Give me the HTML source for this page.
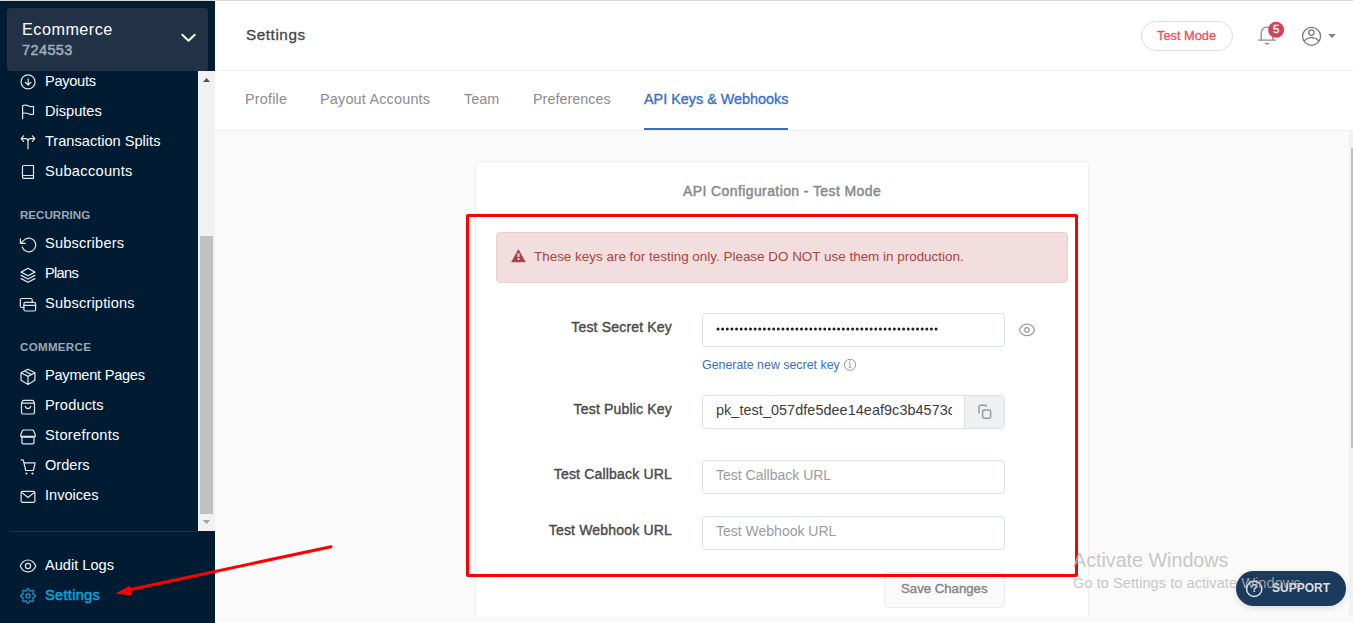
<!DOCTYPE html>
<html><head><meta charset="utf-8">
<style>
*{margin:0;padding:0;box-sizing:border-box}
html,body{width:1353px;height:623px;overflow:hidden;background:#fafafa;font-family:"Liberation Sans",sans-serif}
.a{position:absolute;white-space:nowrap}
svg{position:absolute;overflow:visible}
#topline{position:absolute;left:0;top:0;width:1353px;height:1px;background:#d9d9d9}
#side{position:absolute;left:0;top:1px;width:215px;height:622px;background:#011b33}
#sw{position:absolute;left:7px;top:7px;width:201px;height:63px;background:#213246;border-radius:3px}
.nav{position:absolute;left:45px;font-size:14.6px;line-height:15px;color:#fff;white-space:nowrap}
.sec{position:absolute;left:20px;font-size:11.6px;font-weight:bold;line-height:12px;color:#9aa7b4}
#sbar{position:absolute;left:198px;top:71px;width:17px;height:460px;background:#f1f1f1}
#thumb{position:absolute;left:2px;top:165px;width:13px;height:278px;background:#c1c1c1}
#hdr{position:absolute;left:215px;top:1px;width:1138px;height:69px;background:#fff}
#hb1{position:absolute;left:215px;top:70px;width:1138px;height:1px;background:#efefef}
#tabs{position:absolute;left:215px;top:71px;width:1138px;height:59px;background:#fff}
#hb2{position:absolute;left:215px;top:130px;width:1138px;height:1px;background:#efefef}
.tab{position:absolute;font-size:14.4px;line-height:15px;color:#8c8c8c;white-space:nowrap}
#card{position:absolute;left:475px;top:161px;width:614px;height:470px;background:#fff;border:1px solid #efefef;border-radius:4px}
#alert{position:absolute;left:496px;top:232px;width:572px;height:51px;background:#f2dede;border:1px solid #ebccd1;border-radius:4px}
.lbl{position:absolute;font-size:14px;line-height:15px;color:#4a4a4a;letter-spacing:0.18px;-webkit-text-stroke:0.4px #4a4a4a;text-align:right;right:681px;white-space:nowrap}
.inp{position:absolute;left:702px;width:303px;height:34px;border:1px solid #dde2e5;border-radius:3px;background:#fff;overflow:hidden}
.ph{position:absolute;left:13px;top:7px;font-size:14px;line-height:15px;color:#9b9b9b;white-space:nowrap}
#red{position:absolute;left:466px;top:214px;width:612px;height:363px;border:3px solid #ff0000;border-radius:2px}
.ic{fill:none;stroke:#e4e7ea;stroke-width:1.2;stroke-linecap:round;stroke-linejoin:round}
</style></head><body>
<div id="topline"></div>
<div id="side"><div id="sw"></div></div>
<div class="a" style="left:22px;top:21px;font-size:16.2px;line-height:16px;color:#fff;letter-spacing:0.5px">Ecommerce</div>
<svg style="left:0;top:0" width="215" height="623"><path d="M182.3 34.7 L188.5 40.8 L194.7 34.7" fill="none" stroke="#fff" stroke-width="2" stroke-linecap="round" stroke-linejoin="round"/></svg>
<div class="a" style="left:22px;top:43px;font-size:14.5px;line-height:14px;color:#a3afbc;letter-spacing:0.4px;-webkit-text-stroke:0.45px #a3afbc">724553</div>

<div class="nav" style="top:74px;letter-spacing:-0.3px">Payouts</div>
<div class="nav" style="top:104px">Disputes</div>
<div class="nav" style="top:134px">Transaction Splits</div>
<div class="nav" style="top:164px;letter-spacing:0.3px">Subaccounts</div>
<div class="sec" style="top:209px">RECURRING</div>
<div class="nav" style="top:236px;letter-spacing:0.2px">Subscribers</div>
<div class="nav" style="top:266px;letter-spacing:-0.7px">Plans</div>
<div class="nav" style="top:296px;letter-spacing:0.17px">Subscriptions</div>
<div class="sec" style="top:341px;letter-spacing:0.28px">COMMERCE</div>
<div class="nav" style="top:368px;letter-spacing:-0.25px">Payment Pages</div>
<div class="nav" style="top:398px;letter-spacing:0.14px">Products</div>
<div class="nav" style="top:428px;letter-spacing:0.3px">Storefronts</div>
<div class="nav" style="top:458px">Orders</div>
<div class="nav" style="top:488px">Invoices</div>

<svg style="left:0;top:0" width="215" height="623" class="ic">
<!-- payouts -->
<circle cx="28.05" cy="81.9" r="7"/><path d="M28.2 78.9V84.7M25.3 82.3L28.2 85L30.9 82.3"/>
<!-- disputes -->
<path d="M22.6 118.7V105.5C25 104.8 27 105 28.5 106C30 107 31.5 106.6 33.5 106.4V114.2C31.5 114.4 30 114.8 28.5 113.8C27 112.8 25 112.8 22.6 113.4"/>
<!-- splits -->
<path d="M28 148.7V141.2C28 139.7 27 138.6 25.5 138.6H21.3M23.6 135.8L21.2 138.6L23.6 141.3M28 141.2C28 139.7 29 138.6 30.5 138.6H34.8M32.4 135.8L34.8 138.6L32.4 141.3"/>
<!-- subaccounts book -->
<path d="M23.8 165.5H33.5V178.3H23.8C23 178.3 22.5 177.7 22.5 176.9V166.8C22.5 166 23 165.5 23.8 165.5ZM22.5 176.9C22.5 176.1 23 175.5 23.8 175.5H33.5"/>
<!-- subscribers -->
<path d="M22.2 246.8A6.9 6.9 0 1 0 23.2 241L20.8 243.1M20.4 238.9V243.3H25.3"/>
<!-- plans -->
<path d="M28 268.3L34.9 272.1L28 275.7L21.1 272.1ZM21.1 275.4L28 279L34.9 275.4M21.1 278.6L28 282.3L34.9 278.6"/>
<!-- subscriptions -->
<path d="M23.9 307.5H21.8C21 307.5 20.3 306.8 20.3 306V300C20.3 299.2 21 298.5 21.8 298.5H30.7C31.5 298.5 32.2 299.2 32.2 300V302.4"/>
<rect x="23.9" y="302.4" width="11.7" height="8.6" rx="1.5"/><path d="M23.9 305.4H35.6"/>
<!-- payment pages cube -->
<path d="M28 369.2L34.9 372.8V380.3L28 384.4L21 380.3V372.8ZM21 372.8L28 376.4L34.9 372.8M28 376.4V384.4M24.5 371L31.5 374.6"/>
<!-- products bag -->
<path d="M21.5 403.2V412.6C21.5 413.4 22.1 414 22.9 414H33.1C33.9 414 34.5 413.4 34.5 412.6V403.2L33.4 401C33.1 400.5 32.7 400.3 32.2 400.3H23.8C23.3 400.3 22.9 400.5 22.6 401ZM21.5 403.2H34.5M25.3 406.4C26.5 409.3 29.5 409.3 30.75 406.4"/>
<!-- storefront -->
<path d="M23.6 430H32.4C32.9 430 33.3 430.3 33.5 430.8L35.2 434.6V436.4H20.8V434.6L22.5 430.8C22.7 430.3 23.1 430 23.6 430ZM20.8 436.4C21.6 437.6 23.1 437.6 23.9 436.4C24.7 437.6 26.2 437.6 27 436.4C27.8 437.6 29.3 437.6 30.1 436.4C30.9 437.6 32.4 437.6 33.2 436.4C33.8 437.4 34.7 437.4 35.2 436.4M21.9 437V442.4C21.9 443.2 22.5 443.8 23.3 443.8H32.6C33.4 443.8 34 443.2 34 442.4V437"/>
<!-- orders cart -->
<path d="M21.1 459.8H22.4C22.9 459.8 23.3 460.1 23.4 460.6L25.7 470.5H33.4L35.1 462.8H23.9"/>
<circle cx="26.4" cy="473.5" r="1.1" fill="#e4e7ea" stroke="none"/><circle cx="32.5" cy="473.5" r="1.1" fill="#e4e7ea" stroke="none"/>
<!-- invoices -->
<rect x="21.1" y="491.3" width="13.8" height="11.1" rx="1.6"/><path d="M21.6 492.4L28 497.5L34.4 492.4"/>
<!-- audit eye -->
<path d="M20.2 566C22 562 25 560 28 560S34 562 35.8 566C34 570 31 571.9 28 571.9S22 570 20.2 566Z"/><circle cx="28" cy="566" r="2.6"/>
</svg>
<svg style="left:0;top:0" width="215" height="623"><g fill="none" stroke="#12a1d9" stroke-width="1.2">
<path d="M35.35 595.90 L35.19 596.37 L34.77 596.79 L34.18 597.13 L33.58 597.39 L33.10 597.63 L32.85 597.91 L32.83 598.28 L33.00 598.79 L33.24 599.40 L33.41 600.05 L33.42 600.65 L33.20 601.10 L32.75 601.32 L32.15 601.31 L31.50 601.14 L30.89 600.90 L30.38 600.73 L30.01 600.75 L29.73 601.00 L29.49 601.48 L29.23 602.08 L28.89 602.67 L28.47 603.09 L28.00 603.25 L27.53 603.09 L27.11 602.67 L26.77 602.08 L26.51 601.48 L26.27 601.00 L25.99 600.75 L25.62 600.73 L25.11 600.90 L24.50 601.14 L23.85 601.31 L23.25 601.32 L22.80 601.10 L22.58 600.65 L22.59 600.05 L22.76 599.40 L23.00 598.79 L23.17 598.28 L23.15 597.91 L22.90 597.63 L22.42 597.39 L21.82 597.13 L21.23 596.79 L20.81 596.37 L20.65 595.90 L20.81 595.43 L21.23 595.01 L21.82 594.67 L22.42 594.41 L22.90 594.17 L23.15 593.89 L23.17 593.52 L23.00 593.01 L22.76 592.40 L22.59 591.75 L22.58 591.15 L22.80 590.70 L23.25 590.48 L23.85 590.49 L24.50 590.66 L25.11 590.90 L25.62 591.07 L25.99 591.05 L26.27 590.80 L26.51 590.32 L26.77 589.72 L27.11 589.13 L27.53 588.71 L28.00 588.55 L28.47 588.71 L28.89 589.13 L29.23 589.72 L29.49 590.32 L29.73 590.80 L30.01 591.05 L30.38 591.07 L30.89 590.90 L31.50 590.66 L32.15 590.49 L32.75 590.48 L33.20 590.70 L33.42 591.15 L33.41 591.75 L33.24 592.40 L33.00 593.01 L32.83 593.52 L32.85 593.89 L33.10 594.17 L33.58 594.41 L34.18 594.67 L34.77 595.01 L35.19 595.43 L35.35 595.90Z" stroke-linejoin="round"/>
<circle cx="28" cy="595.9" r="2.1"/></g></svg>

<div id="sbar"><div id="thumb"></div></div>
<svg style="left:0;top:0" width="215" height="623"><path d="M203 82L206.5 77.9L210 82Z" fill="#505050"/><path d="M203 520L206.5 524.2L210 520Z" fill="#a3a3a3"/></svg>
<div class="a" style="left:10px;top:531px;width:188px;height:1px;background:#1e3348"></div>
<div class="nav" style="top:558px">Audit Logs</div>
<div class="nav" style="top:588px;color:#0ba4db;letter-spacing:0.3px;-webkit-text-stroke:0.45px #0ba4db">Settings</div>

<div id="hdr"></div>
<div id="hb1"></div>
<div id="tabs"></div>
<div id="hb2"></div>
<div class="a" style="left:246px;top:27px;font-size:15.3px;line-height:16px;color:#454545;letter-spacing:0.55px;-webkit-text-stroke:0.3px #454545">Settings</div>
<div class="a" style="left:1141px;top:21px;width:92px;height:30px;border:1px solid #dcdcdc;border-radius:15px;background:#fff"></div>
<div class="a" style="left:1157px;top:29px;font-size:12.8px;line-height:13px;color:#ef4f5b;-webkit-text-stroke:0.3px #ef4f5b">Test Mode</div>
<svg style="left:0;top:0" width="1353" height="70">
<path d="M1258.4 40.1H1275.6M1261.2 40.1V33C1261.2 29.6 1263.8 27.2 1267 27.2S1272.8 29.6 1272.8 33V40.1M1265.4 43.2C1266.3 44 1267.5 44 1268.4 43.2" fill="none" stroke="#8c8c8c" stroke-width="1.3" stroke-linecap="round"/>
<circle cx="1276.1" cy="29.8" r="8" fill="#cf4459"/>
<circle cx="1311.55" cy="36.3" r="9" fill="none" stroke="#7a7a7a" stroke-width="1.3"/>
<circle cx="1311.4" cy="32.6" r="2.7" fill="none" stroke="#7a7a7a" stroke-width="1.3"/>
<path d="M1304 41.3C1307.5 36.3 1315.5 36.3 1319 41.3" fill="none" stroke="#7a7a7a" stroke-width="1.3"/>
<path d="M1328.1 34.1H1335.8L1331.95 37.9Z" fill="#808080"/>
</svg>
<div class="a" style="left:1273px;top:24px;font-size:11.5px;line-height:11px;color:#fff;-webkit-text-stroke:0.3px #fff">5</div>

<div class="tab" style="left:245px;top:92px;letter-spacing:0.2px">Profile</div>
<div class="tab" style="left:320px;top:92px;letter-spacing:0.2px">Payout Accounts</div>
<div class="tab" style="left:464px;top:92px">Team</div>
<div class="tab" style="left:533px;top:92px">Preferences</div>
<div class="tab" style="left:644px;top:92px;color:#3b6fc3;-webkit-text-stroke:0.35px #3b6fc3">API Keys &amp; Webhooks</div>
<div class="a" style="left:644px;top:128px;width:144px;height:2px;background:#3b6fc3"></div>

<div id="card"></div>
<div class="a" style="left:683px;top:184px;font-size:14px;line-height:14px;color:#888;letter-spacing:0.4px;-webkit-text-stroke:0.45px #888">API Configuration - Test Mode</div>
<div id="alert"></div>
<svg style="left:0;top:0" width="1353" height="623"><path d="M518.4 249.6L525.3 261.9H511.6Z" fill="#a94442" stroke="#a94442" stroke-width="0.6" stroke-linejoin="round"/><rect x="517.5" y="253.4" width="2" height="3.6" fill="#f2dede"/><rect x="517.5" y="258.1" width="2" height="1.9" fill="#f2dede"/></svg>
<div class="a" style="left:534px;top:250px;font-size:13.45px;line-height:14px;color:#a94442">These keys are for testing only. Please DO NOT use them in production.</div>

<div class="lbl" style="top:320px">Test Secret Key</div>
<div class="inp" style="top:313px"><svg style="left:13px;top:12px" width="230" height="6" fill="#1e1e1e"><circle cx="2.00" cy="3" r="1.5"/><circle cx="6.64" cy="3" r="1.5"/><circle cx="11.28" cy="3" r="1.5"/><circle cx="15.92" cy="3" r="1.5"/><circle cx="20.56" cy="3" r="1.5"/><circle cx="25.20" cy="3" r="1.5"/><circle cx="29.84" cy="3" r="1.5"/><circle cx="34.48" cy="3" r="1.5"/><circle cx="39.12" cy="3" r="1.5"/><circle cx="43.76" cy="3" r="1.5"/><circle cx="48.40" cy="3" r="1.5"/><circle cx="53.04" cy="3" r="1.5"/><circle cx="57.68" cy="3" r="1.5"/><circle cx="62.32" cy="3" r="1.5"/><circle cx="66.96" cy="3" r="1.5"/><circle cx="71.60" cy="3" r="1.5"/><circle cx="76.24" cy="3" r="1.5"/><circle cx="80.88" cy="3" r="1.5"/><circle cx="85.52" cy="3" r="1.5"/><circle cx="90.16" cy="3" r="1.5"/><circle cx="94.80" cy="3" r="1.5"/><circle cx="99.44" cy="3" r="1.5"/><circle cx="104.08" cy="3" r="1.5"/><circle cx="108.72" cy="3" r="1.5"/><circle cx="113.36" cy="3" r="1.5"/><circle cx="118.00" cy="3" r="1.5"/><circle cx="122.64" cy="3" r="1.5"/><circle cx="127.28" cy="3" r="1.5"/><circle cx="131.92" cy="3" r="1.5"/><circle cx="136.56" cy="3" r="1.5"/><circle cx="141.20" cy="3" r="1.5"/><circle cx="145.84" cy="3" r="1.5"/><circle cx="150.48" cy="3" r="1.5"/><circle cx="155.12" cy="3" r="1.5"/><circle cx="159.76" cy="3" r="1.5"/><circle cx="164.40" cy="3" r="1.5"/><circle cx="169.04" cy="3" r="1.5"/><circle cx="173.68" cy="3" r="1.5"/><circle cx="178.32" cy="3" r="1.5"/><circle cx="182.96" cy="3" r="1.5"/><circle cx="187.60" cy="3" r="1.5"/><circle cx="192.24" cy="3" r="1.5"/><circle cx="196.88" cy="3" r="1.5"/><circle cx="201.52" cy="3" r="1.5"/><circle cx="206.16" cy="3" r="1.5"/><circle cx="210.80" cy="3" r="1.5"/><circle cx="215.44" cy="3" r="1.5"/><circle cx="220.08" cy="3" r="1.5"/></svg></div>
<svg style="left:0;top:0" width="1353" height="623">
<path d="M1019.3 330C1021 326.2 1024 324.2 1027 324.2S1033 326.2 1034.7 330C1033 333.8 1030 335.7 1027 335.7S1021 333.8 1019.3 330Z" fill="none" stroke="#9a9a9a" stroke-width="1.2"/>
<circle cx="1026.9" cy="329.9" r="2.2" fill="none" stroke="#9a9a9a" stroke-width="1.2"/>
<circle cx="850" cy="364.8" r="5.6" fill="none" stroke="#9a9a9a" stroke-width="1"/>
<path d="M850 362.8V367.6M848.8 367.6H851.2M848.8 362.8H850" fill="none" stroke="#9a9a9a" stroke-width="1"/><circle cx="850" cy="361" r="0.7" fill="#9a9a9a"/>
</svg>
<div class="a" style="left:702px;top:359px;font-size:12.4px;line-height:13px;color:#3b6fc3">Generate new secret key</div>
<div class="lbl" style="top:402px">Test Public Key</div>
<div class="inp" style="top:395px;width:303px">
  <div class="a" style="left:13px;top:6px;width:236px;overflow:hidden;font-size:14.4px;line-height:17px;color:#3b3b3b;letter-spacing:0.07px">pk_test_057dfe5dee14eaf9c3b4573c</div>
  <div class="a" style="left:261px;top:0;width:41px;height:32px;background:#eef0f1;border-left:1px solid #dde2e5"></div>
</div>
<svg style="left:0;top:0" width="1353" height="623" fill="none" stroke="#999" stroke-width="1.5">
<path d="M979 413.6V406.8C979 406 979.8 405.2 980.6 405.2H985.2C986 405.2 986.6 405.8 986.6 406.6"/>
<rect x="982.6" y="409.9" width="8" height="8.4" rx="1.6"/>
</svg>
<div class="lbl" style="top:467px">Test Callback URL</div>
<div class="inp" style="top:460px"><div class="ph">Test Callback URL</div></div>
<div class="lbl" style="top:523px">Test Webhook URL</div>
<div class="inp" style="top:516px"><div class="ph">Test Webhook URL</div></div>

<div class="a" style="left:884px;top:572px;width:121px;height:36px;background:#fafafa;border:1px solid #ececec;border-radius:4px"></div>
<div class="a" style="left:901px;top:582px;font-size:13.2px;line-height:13px;color:#858585;-webkit-text-stroke:0.4px #858585">Save Changes</div>

<div class="a" style="left:215px;top:616px;width:1138px;height:7px;background:#fafafa"></div>
<div class="a" style="left:1349px;top:131px;width:4px;height:485px;background:#f1f1f1"></div>
<div class="a" style="left:1351px;top:148px;width:2px;height:300px;background:#c1c1c1"></div>

<div id="red"></div>
<svg style="left:0;top:0" width="1353" height="623"><path d="M331 546.7L126 590.5" stroke="#ff0000" stroke-width="3" stroke-linecap="round"/><path d="M116.7 593.3L130 586.3L131.5 594.8Z" fill="#ff0000" stroke="#ff0000" stroke-width="1" stroke-linejoin="round"/></svg>

<div class="a" style="left:1236px;top:571px;width:110px;height:35px;border-radius:18px;background:#1b3a5c;box-shadow:0 2px 6px rgba(0,0,0,0.12)"></div>
<svg style="left:0;top:0" width="1353" height="623"><circle cx="1254.2" cy="588.9" r="7.6" fill="none" stroke="#dfe3e8" stroke-width="1.5"/></svg>
<div class="a" style="left:1251px;top:582px;font-size:11px;font-weight:bold;line-height:12px;color:#dfe3e8">?</div>
<div class="a" style="left:1272px;top:582px;font-size:12px;font-weight:bold;line-height:12px;color:#dcdfe3">SUPPORT</div>

<div class="a" style="left:1073px;top:550px;font-size:19.7px;line-height:20px;color:rgba(185,185,185,0.8)">Activate Windows</div>
<div class="a" style="left:1073px;top:576px;font-size:14.7px;line-height:15px;color:rgba(185,185,185,0.8)">Go to Settings to activate Windows.</div>
</body></html>
